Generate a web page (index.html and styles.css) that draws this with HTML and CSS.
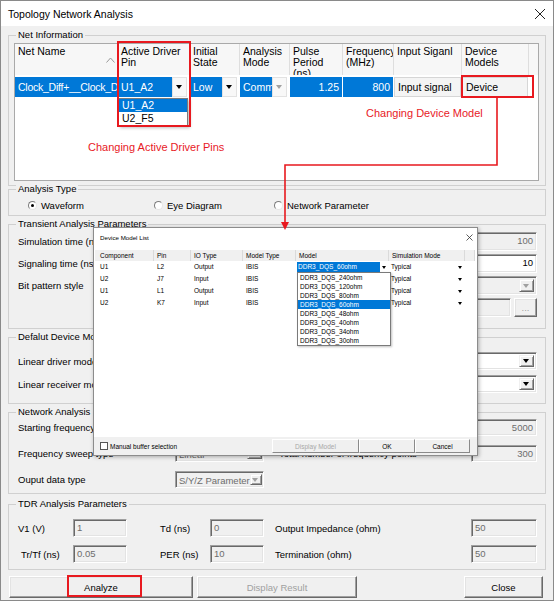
FILE: index.html
```html
<!DOCTYPE html>
<html lang="en">
<head>
  <meta charset="UTF-8" />
  <meta name="viewport" content="width=device-width, initial-scale=1.0"/>
  <title>Topology Network Analysis</title>
  <link rel="stylesheet" href="styles.css">
</head>
<body>
  <div class="window">
    <div class="titlebar">
      <span>Topology Network Analysis</span>
      <svg width="12" height="12" viewBox="0 0 12 12"><path d="M1 1 L11 11 M11 1 L1 11" stroke="#222" stroke-width="1" fill="none"/></svg>
    </div>

    <div class="client">
      <!-- Net information grid -->
      <div class="group net-info">
        <div class="group-title">Net Information</div>
        <div class="grid">
          <div class="grid-head">
            <div class="hcell w-name">Net Name
              <svg class="sort" width="9" height="6" viewBox="0 0 9 6"><polyline points="0.5,5.5 4.5,1 8.5,5.5" stroke="#9a9a9a" fill="none"/></svg>
            </div>
            <div class="hcell w-pin">Active Driver<br>Pin</div>
            <div class="hcell w-state">Initial<br>State</div>
            <div class="hcell w-mode">Analysis<br>Mode</div>
            <div class="hcell w-pulse">Pulse<br>Period<br>(ns)</div>
            <div class="hcell w-freq">Frequency<br>(MHz)</div>
            <div class="hcell w-input">Input Siganl</div>
            <div class="hcell w-device">Device<br>Models</div>
            <div class="hcell w-fill"></div>
          </div>
          <div class="grid-row">
            <div class="cell w-name"><span class="sel">Clock_Diff+__Clock_Diff-</span></div>
            <div class="cell w-pin"><span class="sel">U1_A2</span><span class="drop"></span></div>
            <div class="cell w-state"><span class="sel">Low</span><span class="drop"></span></div>
            <div class="cell w-mode"><span class="sel">Common</span><span class="drop off"></span></div>
            <div class="cell w-pulse"><span class="sel num">1.25</span></div>
            <div class="cell w-freq"><span class="sel num">800</span></div>
            <div class="cell w-input"><span class="plain">Input signal</span></div>
            <div class="cell w-device"><span class="plain">Device</span></div>
          </div>
        </div>
      </div>

      <div class="group analysis-type">
        <div class="group-title">Analysis Type</div>
        <div class="radios">
          <label class="radio-item first"><span class="radio checked"></span>Waveform</label>
          <label class="radio-item second"><span class="radio"></span>Eye Diagram</label>
          <label class="radio-item"><span class="radio"></span>Network Parameter</label>
        </div>
      </div>

      <div class="group transient">
        <div class="group-title">Transient Analysis Parameters</div>
        <div class="group-body">
          <div class="row">
            <span class="label">Simulation time (ns)</span>
            <span class="field off num t-wide">100</span>
          </div>
          <div class="row">
            <span class="label">Signaling time (ns)</span>
            <span class="field num t-wide">10</span>
          </div>
          <div class="row">
            <span class="label">Bit pattern style</span>
            <span class="combo off t-wide"><span class="value"></span><span class="btn"></span></span>
          </div>
          <div class="row">
            <span class="field off t-file"></span>
            <span class="button3d small off">...</span>
          </div>
        </div>
      </div>

      <div class="group device-model">
        <div class="group-title">Defalut Device Model</div>
        <div class="group-body">
          <div class="row">
            <span class="label">Linear driver model</span>
            <span class="combo t-wide"><span class="value"></span><span class="btn"></span></span>
          </div>
          <div class="row">
            <span class="label">Linear receiver model</span>
            <span class="combo t-wide"><span class="value"></span><span class="btn"></span></span>
          </div>
        </div>
      </div>

      <div class="group network">
        <div class="group-title">Network Analysis Parameters</div>
        <div class="group-body">
          <div class="row">
            <span class="label n-label">Starting frequency (MHz)</span>
            <span class="field off n-ctl">0</span>
            <span class="label n-label2">Ending frequency (MHz)</span>
            <span class="field off num n-box">5000</span>
          </div>
          <div class="row">
            <span class="label n-label">Frequency sweep type</span>
            <span class="combo off n-ctl"><span class="value">Linear</span><span class="btn"></span></span>
            <span class="label n-label2">Total number of frequency points</span>
            <span class="field off num n-box">300</span>
          </div>
          <div class="row">
            <span class="label n-label">Ouput data type</span>
            <span class="combo off n-ctl"><span class="value">S/Y/Z Parameter</span><span class="btn"></span></span>
          </div>
        </div>
      </div>

      <div class="group tdr">
        <div class="group-title">TDR Analysis Parameters</div>
        <div class="group-body">
          <div class="row">
            <span class="label d-label">V1 (V)</span>
            <span class="field off d-box">1</span>
            <span class="label d-label2">Td (ns)</span>
            <span class="field off d-box">0</span>
            <span class="label d-label3">Output Impedance (ohm)</span>
            <span class="field off d-box3">50</span>
          </div>
          <div class="row">
            <span class="label d-label indent">Tr/Tf (ns)</span>
            <span class="field off d-box">0.05</span>
            <span class="label d-label2">PER (ns)</span>
            <span class="field off d-box">10</span>
            <span class="label d-label3">Termination (ohm)</span>
            <span class="field off d-box3">50</span>
          </div>
        </div>
      </div>

      <div class="actions">
        <span class="button3d analyze">Analyze</span>
        <span class="button3d display off">Display Result</span>
        <span class="button3d close">Close</span>
      </div>
    </div>

    <!-- popup list of the active driver pin cell -->
    <div class="pin-list">
      <div class="item hot">U1_A2</div>
      <div class="item">U2_F5</div>
    </div>

    <!-- Device Model List dialog -->
    <div class="dialog">
      <div class="dlg-title">
        <span>Device Model List</span>
        <svg width="7" height="7" viewBox="0 0 7 7"><path d="M0.5 0.5 L6.5 6.5 M6.5 0.5 L0.5 6.5" stroke="#333" stroke-width="0.8" fill="none"/></svg>
      </div>
      <div class="dlg-body">
        <div class="dhead">
          <span class="dc c-comp">Component</span>
          <span class="dc c-pin">Pin</span>
          <span class="dc c-io">IO Type</span>
          <span class="dc c-mt">Model Type</span>
          <span class="dc c-model">Model</span>
          <span class="dc c-sim">Simulation Mode</span>
          <span class="dc c-fill"></span>
        </div>
        <div class="drow">
          <span class="dc c-comp">U1</span><span class="dc c-pin">L2</span><span class="dc c-io">Output</span><span class="dc c-mt">IBIS</span>
          <span class="dc c-model"><span class="dcombo"><span class="v hot">DDR3_DQS_60ohm</span><span class="b"></span></span></span>
          <span class="dc c-sim"><span class="dcombo"><span class="v">Typical</span><span class="b"></span></span></span>
        </div>
        <div class="drow">
          <span class="dc c-comp">U2</span><span class="dc c-pin">J7</span><span class="dc c-io">Input</span><span class="dc c-mt">IBIS</span>
          <span class="dc c-model"></span>
          <span class="dc c-sim"><span class="dcombo"><span class="v">Typical</span><span class="b"></span></span></span>
        </div>
        <div class="drow">
          <span class="dc c-comp">U1</span><span class="dc c-pin">L1</span><span class="dc c-io">Output</span><span class="dc c-mt">IBIS</span>
          <span class="dc c-model"></span>
          <span class="dc c-sim"><span class="dcombo"><span class="v">Typical</span><span class="b"></span></span></span>
        </div>
        <div class="drow">
          <span class="dc c-comp">U2</span><span class="dc c-pin">K7</span><span class="dc c-io">Input</span><span class="dc c-mt">IBIS</span>
          <span class="dc c-model"></span>
          <span class="dc c-sim"><span class="dcombo"><span class="v">Typical</span><span class="b"></span></span></span>
        </div>
      </div>
      <div class="dlg-foot">
        <label class="check"><span class="checkbox"></span>Manual buffer selection</label>
        <span class="dbtn off w-display">Display Model</span>
        <span class="dbtn w-ok">OK</span>
        <span class="dbtn w-cancel">Cancel</span>
      </div>

      <div class="model-list">
        <div class="item">DDR3_DQS_240ohm</div>
        <div class="item">DDR3_DQS_120ohm</div>
        <div class="item">DDR3_DQS_80ohm</div>
        <div class="item hot">DDR3_DQS_60ohm</div>
        <div class="item">DDR3_DQS_48ohm</div>
        <div class="item">DDR3_DQS_40ohm</div>
        <div class="item">DDR3_DQS_34ohm</div>
        <div class="item">DDR3_DQS_30ohm</div>
      </div>
    </div>

    <!-- red annotations -->
    <div class="mark mark-pin"></div>
    <div class="mark mark-device"></div>
    <div class="mark mark-analyze"></div>
    <div class="note note-pins">Changing Active Driver Pins</div>
    <div class="note note-device">Changing Device Model</div>
    <svg class="connector" width="554" height="601" viewBox="0 0 554 601">
      <polyline points="497,97 497,165 285,165 285,223" stroke="#e8191f" stroke-width="1.6" fill="none"/>
      <polygon points="281,222 289,222 285,230" fill="#e8191f"/>
    </svg>
  </div>
</body>
</html>
```

FILE: styles.css
```css
body {
  margin: 0;
  font-family: "Liberation Sans", Arial, sans-serif;
  font-size: 9.5px;
  color: #000;
  background: #fff;
}

.window {
  position: relative;
  width: 554px;
  height: 601px;
  box-sizing: border-box;
  border: 1px solid #8a8a8a;
  background: #f0f0f0;
  overflow: hidden;
}

.titlebar {
  height: 25px;
  background: #fff;
  display: flex;
  align-items: center;
  justify-content: space-between;
  padding: 0 7px;
  font-size: 10.5px;
}

.client {
  padding: 9px 7px 0;
}

/* group boxes */
.group {
  box-sizing: border-box;
  border: 1px solid #d0d0d0;
  margin-top: 8px;
}

.group-title {
  width: max-content;
  margin: -7px 0 0 7px;
  padding: 0 2px;
  line-height: 12px;
  background: #f0f0f0;
}

.group-body {
  padding: 0 8px 0 9px;
}

.net-info { margin-top: 0; height: 151px; }
.analysis-type { margin-top: 3px; height: 27px; }
.transient { height: 105px; }
.device-model { height: 67px; }
.network { height: 82px; }
.tdr { margin-top: 10px; height: 66px; }

/* net information grid */
.grid {
  margin: 2px 6px 0 5px;
  height: 138px;
  box-sizing: border-box;
  border: 1px solid #a9a9a9;
  background: #fff;
  font-size: 10.5px;
}

.grid-head {
  display: flex;
  height: 31px;
  background: #f7f7f7;
}

.hcell {
  position: relative;
  box-sizing: border-box;
  border-right: 1px solid #dedede;
  padding: 2px 0 0 3px;
  line-height: 11px;
  white-space: nowrap;
  overflow: hidden;
}

.sort {
  position: absolute;
  right: 2px;
  top: 13px;
}

.w-name { width: 103px; }
.w-pin { width: 72px; }
.w-state { width: 50px; }
.w-mode { width: 50px; }
.w-pulse { width: 53px; }
.w-freq { width: 51px; }
.w-input { width: 68px; }
.w-device { width: 67px; }
.w-fill { flex: 1; border-right: none; }

.grid-row {
  display: flex;
  height: 20px;
  margin-top: 2px;
}

.cell {
  display: flex;
  box-sizing: border-box;
  padding-right: 1px;
  white-space: nowrap;
  overflow: hidden;
}

.sel {
  flex: 1;
  overflow: hidden;
  background: #0078d7;
  color: #fff;
  line-height: 20px;
  padding-left: 3px;
}

.w-name .sel {
  letter-spacing: -0.25px;
}

.num {
  text-align: right;
  padding-right: 3px;
}

.plain {
  flex: 1;
  box-sizing: border-box;
  background: #f4f4f4;
  border: 1px solid #d6d6d6;
  line-height: 18px;
  padding-left: 3px;
}

.drop {
  position: relative;
  width: 15px;
  margin-right: 2px;
  background: #f8f8f8;
  border: 1px solid #e2e2e2;
  box-sizing: border-box;
}

.drop::after,
.btn::after,
.b::after {
  content: "";
  position: absolute;
  left: 50%;
  top: 50%;
  margin: -2px 0 0 -3.5px;
  border-style: solid;
  border-width: 4px 3.5px 0;
  border-color: #000 transparent transparent;
}

.drop.off::after,
.off .btn::after {
  border-top-color: #a0a0a0;
}

.pin-list {
  position: absolute;
  left: 117px;
  top: 97px;
  width: 70px;
  height: 28px;
  box-sizing: border-box;
  border: 1px solid #7a7a7a;
  background: #fff;
  box-shadow: 2px 2px 3px rgba(0, 0, 0, 0.25);
  font-size: 10.5px;
}

.pin-list .item {
  height: 13px;
  line-height: 13px;
  padding-left: 3px;
}

.hot {
  background: #0078d7;
  color: #fff;
}

/* radios */
.radios {
  display: flex;
  height: 12px;
  margin-top: 4px;
  padding-left: 19px;
  align-items: center;
}

.radio-item {
  display: flex;
  align-items: center;
}

.radio-item.first { width: 126px; }
.radio-item.second { width: 120px; }

.radio {
  position: relative;
  width: 9px;
  height: 9px;
  box-sizing: border-box;
  border-radius: 50%;
  border: 1px solid;
  border-color: #7c7c7c #e6e6e6 #e6e6e6 #7c7c7c;
  background: #fff;
  margin-right: 4px;
}

.radio.checked::after {
  content: "";
  position: absolute;
  left: 2px;
  top: 2px;
  width: 3px;
  height: 3px;
  border-radius: 50%;
  background: #000;
}

/* rows of labelled inputs */
.row {
  display: flex;
  align-items: center;
  height: 19px;
}

.transient .group-body { padding-top: 2px; }
.transient .row + .row { margin-top: 3px; }

.device-model .group-body { padding-top: 9px; }
.device-model .row { height: 18px; }
.device-model .row + .row { margin-top: 5px; }

.network .group-body { padding-top: 1px; }
.network .row { height: 17px; }
.network .row + .row { margin-top: 9px; }

.tdr .group-body { padding-top: 9px; }
.tdr .row { height: 18px; }
.tdr .row + .row { margin-top: 8px; }

.label {
  white-space: nowrap;
}

.field,
.combo {
  box-sizing: border-box;
  height: 100%;
  background: #fff;
  border: 1px solid;
  border-color: #a0a0a0 #fff #fff #a0a0a0;
  box-shadow: inset 1px 1px 0 #696969, inset -1px -1px 0 #e3e3e3;
  line-height: 15px;
  padding: 0 3px;
  white-space: nowrap;
  overflow: hidden;
}

.field.off,
.combo.off {
  background: #f0f0f0;
  color: #6d6d6d;
}

.combo {
  display: flex;
  padding: 2px 2px 2px 3px;
  line-height: 13px;
}

.combo .value {
  flex: 1;
}

.btn {
  position: relative;
  width: 15px;
  box-sizing: border-box;
  background: #f0f0f0;
  border: 1px solid;
  border-color: #f0f0f0 #696969 #696969 #f0f0f0;
  box-shadow: inset 1px 1px 0 #fff, inset -1px -1px 0 #a0a0a0;
}

.t-wide { margin-left: auto; width: 160px; }
.t-file { margin-left: auto; width: 110px; }

.button3d {
  box-sizing: border-box;
  display: flex;
  align-items: center;
  justify-content: center;
  background: #f0f0f0;
  border: 1px solid;
  border-color: #fff #696969 #696969 #fff;
  box-shadow: inset -1px -1px 0 #a0a0a0, inset 1px 1px 0 #e3e3e3;
}

.button3d.off {
  color: #a0a0a0;
}

.button3d.small {
  width: 23px;
  height: 19px;
  margin-left: 3px;
}

.n-label { width: 157px; }
.n-ctl { width: 89px; }
.n-label2 { margin-left: 15px; flex: 1; }
.n-box { width: 66px; }
.combo.n-ctl { padding-right: 1px; }

.d-label { width: 55px; }
.d-label.indent { padding-left: 3px; box-sizing: border-box; }
.d-box { width: 54px; }
.d-label2 { margin-left: 33px; width: 50px; }
.d-label3 { margin-left: 11px; flex: 1; }
.d-box3 { width: 66px; }

.actions {
  display: flex;
  height: 22px;
  margin-top: 6px;
}

.analyze { width: 184px; margin-left: 1px; }
.display { width: 160px; margin-left: 4px; }
.close { width: 79px; margin-left: auto; margin-right: 3px; }

/* dialog */
.dialog {
  position: absolute;
  left: 92px;
  top: 226px;
  width: 385px;
  height: 229px;
  box-sizing: border-box;
  border: 1px solid #8c8c8c;
  background: #fff;
  box-shadow: 1px 1px 4px rgba(0, 0, 0, 0.3);
  display: flex;
  flex-direction: column;
  font-size: 6.5px;
}

.dlg-title {
  height: 18px;
  display: flex;
  align-items: center;
  justify-content: space-between;
  padding: 0 4px 0 6px;
  font-size: 6.2px;
}

.dlg-body {
  flex: 1;
  padding: 4px 2px 0 1px;
}

.dhead {
  display: flex;
  height: 11px;
  background: #f0f0f0;
}

.drow {
  display: flex;
  height: 12px;
}

.dc {
  box-sizing: border-box;
  line-height: 11px;
  padding-left: 3px;
  white-space: nowrap;
  overflow: hidden;
}

.dhead .dc {
  border-right: 1px solid #dadada;
}

.drow .dc {
  line-height: 12px;
}

.c-comp { width: 59px; padding-left: 5px; }
.c-pin { width: 37px; }
.c-io { width: 52px; }
.c-mt { width: 53px; }
.c-model { width: 93px; }
.c-sim { width: 76px; }
.c-fill { flex: 1; }

.drow .c-model,
.drow .c-sim {
  padding: 1px 0 1px 1px;
}

.dcombo {
  display: flex;
  height: 10px;
  line-height: 10px;
}

.dcombo .v {
  flex: 1;
  padding-left: 1px;
}

.b {
  position: relative;
  width: 9px;
  background: #fff;
}

.b::after {
  margin: -1.5px 0 0 -2.5px;
  border-width: 3px 2.5px 0;
}

.dlg-foot {
  height: 18px;
  background: #f0f0f0;
  display: flex;
  align-items: center;
  padding: 0 7px 0 6px;
}

.check {
  display: flex;
  align-items: center;
  margin-right: auto;
}

.checkbox {
  width: 6px;
  height: 6px;
  border: 1px solid #555;
  background: #fff;
  margin-right: 2px;
}

.dbtn {
  box-sizing: border-box;
  height: 14px;
  display: flex;
  align-items: center;
  justify-content: center;
  background: #f0f0f0;
  border: 1px solid;
  border-color: #fff #8a8a8a #8a8a8a #fff;
}

.dbtn.off { color: #a8a8a8; }
.w-display { width: 87px; }
.w-ok { width: 56px; }
.w-cancel { width: 55px; }

.model-list {
  position: absolute;
  left: 203px;
  top: 44px;
  width: 94px;
  height: 74px;
  box-sizing: border-box;
  border: 1px solid #7a7a7a;
  background: #fff;
  box-shadow: 1px 1px 2px rgba(0, 0, 0, 0.25);
  font-size: 6.5px;
}

.model-list .item {
  height: 9px;
  line-height: 9px;
  padding-left: 2px;
}

/* annotations */
.mark {
  position: absolute;
  box-sizing: border-box;
  border: 2px solid #e8191f;
}

.mark-pin { left: 116px; top: 40px; width: 74px; height: 86px; }
.mark-device { left: 460px; top: 74px; width: 73px; height: 23px; }
.mark-analyze { left: 66px; top: 574px; width: 75px; height: 22px; }

.note {
  position: absolute;
  color: #e8191f;
  font-size: 11px;
  line-height: 14px;
  white-space: nowrap;
}

.note-pins { left: 87px; top: 139px; }
.note-device { left: 365px; top: 105px; }

.connector {
  position: absolute;
  left: -1px;
  top: -1px;
  pointer-events: none;
}
```
